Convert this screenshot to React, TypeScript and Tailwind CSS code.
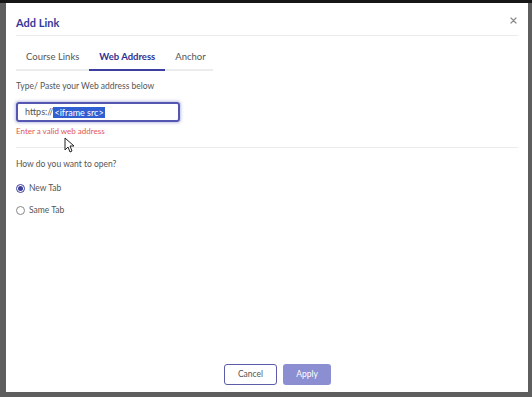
import React from 'react'

export default function App() {
      return (
            <div className="w-[532px] h-[397px] bg-[#5e5e5e] flex flex-col overflow-hidden" style={{ fontFamily: 'Lato, "Noto Sans", sans-serif' }}>
                  {/* top toolbar strip behind the modal */}
                  <div className="h-[3px] w-full bg-[#161616] shrink-0"></div>
                  <div className="flex-1 flex pl-[6px] pr-[4px] pb-[5px]">
                        <div className="w-[522px] h-[389px] bg-white flex flex-col px-[10px] relative">
                              {/* Header */}
                              <div className="h-[33px] shrink-0 flex items-center justify-between border-b border-[#ececec] pt-[6px]">
                                    <h2 className="text-[11px] font-bold text-[#38399a] leading-none">Add Link</h2>
                                    <svg width="7" height="7" viewBox="0 0 7 7" className="mr-[1px] mb-[4px]">
                                          <path d="M1 1 L6 6 M6 1 L1 6" stroke="#8a8a8a" strokeWidth="1.2" strokeLinecap="round" />
                                    </svg>
                              </div>
                              {/* Tabs */}
                              <div className="mt-[10px] w-[197px] flex border-b-2 border-[#ececec] text-[9.5px] h-[25px] whitespace-nowrap">
                                    <div className="px-[10px] flex items-center text-[#555]">Course Links</div>
                                    <div className="px-[10px] flex items-center text-[#2f3192] font-bold border-b-2 border-[#3d3f9e] mb-[-2px]">Web Address</div>
                                    <div className="px-[10px] flex items-center text-[#555]">Anchor</div>
                              </div>
                              <p className="mt-[8px] text-[8.5px] text-[#555] leading-[14px]">Type/ Paste your Web address below</p>
                              <div className="mt-[9px] w-[164px] h-[20px] rounded-[3px] border-2 border-[#5456b0] shadow-[0_0_3px_1px_rgba(110,112,200,0.45)] flex items-center pl-[7px] text-[9px] text-[#555]">
                                    <span>https://</span>
                                    <span className="bg-[#2f5fd1] text-white px-[1px] leading-[11px]">&lt;iframe src&gt;</span>
                              </div>
                              <p className="mt-[3px] text-[8px] text-[#e25656] leading-[12px]">Enter a valid web address</p>
                              <div className="mt-[10px] border-b border-[#ececec]"></div>
                              <p className="mt-[9px] text-[8.5px] text-[#555] leading-[14px]">How do you want to open?</p>
                              <div className="mt-[10px] flex flex-col gap-[8px] text-[8.5px] text-[#555]">
                                    <label className="flex items-center gap-[4px] h-[14px]">
                                          <span className="w-[9px] h-[9px] rounded-full border border-[#3d3f9e] flex items-center justify-center">
                                                <span className="w-[5px] h-[5px] rounded-full bg-[#3d3f9e]"></span>
                                          </span>
                                          New Tab
                                    </label>
                                    <label className="flex items-center gap-[4px] h-[14px]">
                                          <span className="w-[9px] h-[9px] rounded-full border border-[#888]"></span>
                                          Same Tab
                                    </label>
                              </div>
                              {/* Footer */}
                              <div className="mt-auto mb-[7px] flex gap-[6px] pl-[208px]">
                                    <button className="w-[53px] h-[21px] rounded-[3px] border border-[#5b5da8] bg-white text-[8.5px] text-[#555]">Cancel</button>
                                    <button className="w-[48px] h-[21px] rounded-[3px] bg-[#8b8ed0] text-[8.5px] text-white">Apply</button>
                              </div>
                              {/* mouse pointer */}
                              <svg className="absolute left-[58px] top-[134px]" width="10" height="16" viewBox="0 0 10 16">
                                    <path d="M1 1 L1 13 L4 10 L6 15 L8 14 L6 9 L10 9 Z" fill="white" stroke="#222" strokeWidth="1" strokeLinejoin="round" />
                              </svg>
                        </div>
                  </div>
            </div>
      )
}
